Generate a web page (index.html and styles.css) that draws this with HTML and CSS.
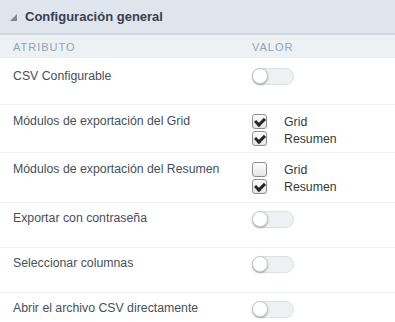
FILE: index.html
```html
<!DOCTYPE html>
<html lang="es">
<head>
<meta charset="utf-8">
<link rel="stylesheet" href="styles.css">
</head>
<body>
<div class="panel">
  <div class="panel-head">
    <span class="caret"></span>
    <span class="title">Configuración general</span>
  </div>
  <div class="cols">
    <div class="c1">ATRIBUTO</div>
    <div class="c2">VALOR</div>
  </div>
  <div class="row r1">
    <div class="c1">CSV Configurable</div>
    <div class="c2"><span class="toggle"><span class="knob"></span></span></div>
  </div>
  <div class="row r2">
    <div class="c1">Módulos de exportación del Grid</div>
    <div class="c2">
      <div class="checks">
        <div class="opt"><span class="cb on"></span><span class="lbl">Grid</span></div>
        <div class="opt"><span class="cb on"></span><span class="lbl">Resumen</span></div>
      </div>
    </div>
  </div>
  <div class="row r3">
    <div class="c1">Módulos de exportación del Resumen</div>
    <div class="c2">
      <div class="checks">
        <div class="opt"><span class="cb"></span><span class="lbl">Grid</span></div>
        <div class="opt"><span class="cb on"></span><span class="lbl">Resumen</span></div>
      </div>
    </div>
  </div>
  <div class="row r4">
    <div class="c1">Exportar con contraseña</div>
    <div class="c2"><span class="toggle"><span class="knob"></span></span></div>
  </div>
  <div class="row r5">
    <div class="c1">Seleccionar columnas</div>
    <div class="c2"><span class="toggle"><span class="knob"></span></span></div>
  </div>
  <div class="row r6">
    <div class="c1">Abrir el archivo CSV directamente</div>
    <div class="c2"><span class="toggle"><span class="knob"></span></span></div>
  </div>
</div>
</body>
</html>
```

FILE: styles.css
```css
html, body {
  margin: 0;
  padding: 0;
  background: #ffffff;
}
body {
  font-family: "Liberation Sans", Arial, sans-serif;
  font-size: 12.3px;
  color: #47505b;
}
.panel {
  width: 395px;
}
.panel-head {
  height: 33px;
  background: #dfe5ec;
  border-bottom: 2px solid #cfd9e0;
  display: flex;
  align-items: center;
  padding-left: 10px;
}
.caret {
  width: 0;
  height: 0;
  border-left: 7px solid transparent;
  border-bottom: 7px solid #7d8a96;
  margin-right: 8px;
  margin-top: 1px;
}
.title {
  font-weight: bold;
  font-size: 13px;
  color: #37404c;
}
.cols {
  display: flex;
  height: 23px;
  align-items: center;
  background: #edf1f4;
  color: #8ea5b6;
  font-size: 11px;
  letter-spacing: 1px;
}
.c1 {
  width: 239px;
  padding-left: 13px;
}
.c2 {
  flex: 1;
}
.row {
  display: flex;
  align-items: flex-start;
  border-bottom: 1px solid #edf1f4;
  box-sizing: border-box;
}
.row .c1 {
  line-height: 14px;
}
.r1 { height: 47px; padding-top: 11px; }
.r2 { height: 48px; padding-top: 9px; }
.r3 { height: 50px; padding-top: 9px; }
.r4 { height: 45px; padding-top: 8px; }
.r5 { height: 45px; padding-top: 8px; }
.r6 { height: 45px; padding-top: 8px; border-bottom: none; }
.r1 .c2 { margin-top: -1px; }
.toggle {
  display: block;
  width: 40px;
  height: 15px;
  border: 1px solid #d9e0e6;
  border-radius: 9px;
  background: #edf1f4;
  position: relative;
}
.knob {
  position: absolute;
  left: -1px;
  top: -1px;
  width: 16px;
  height: 16px;
  border-radius: 50%;
  background: #ffffff;
  border: 1px solid #c8cdd2;
  box-sizing: border-box;
  box-shadow: 0 1px 2px rgba(0,0,0,0.3);
}
.checks {
  display: flex;
  flex-direction: column;
  gap: 2px;
}
.opt {
  display: flex;
  align-items: center;
  height: 15px;
}
.cb {
  width: 15px;
  height: 15px;
  box-sizing: border-box;
  border: 1px solid #8f8f8f;
  border-radius: 3px;
  background: linear-gradient(#ffffff, #e4e4e4);
  position: relative;
  margin-right: 17px;
}
.cb.on::after {
  content: "";
  position: absolute;
  left: 3px;
  top: 1px;
  width: 7px;
  height: 4px;
  border-left: 3px solid #262626;
  border-bottom: 3px solid #262626;
  transform: translate(-1px, 1.5px) rotate(-45deg);
  transform-origin: center;
}
.lbl {
  color: #333a42;
}
```
